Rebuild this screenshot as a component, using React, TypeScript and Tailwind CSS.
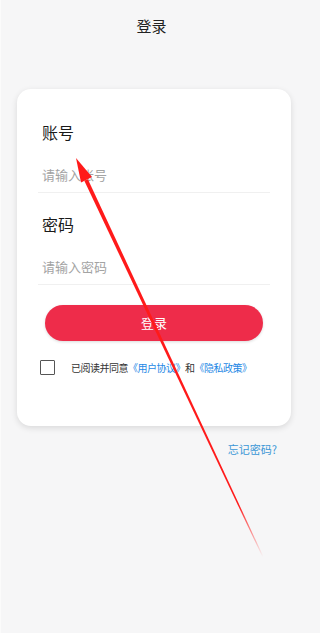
import React from "react";

export default function App() {
  const font = { fontFamily: '"Noto Sans CJK SC", "Noto Sans", sans-serif' };
  return (
    <div className="min-h-screen bg-[#f6f6f7]">
      <div
        className="relative w-[302px] h-[633px] overflow-hidden bg-[#f6f6f7] border-l border-[#fbfbfb]"
        style={font}
      >
        <div className="pt-[17px] text-center text-[15px] leading-[18px] text-[#222] font-normal">登录</div>

        <div className="mt-[54px] mx-[16px] w-[274px] rounded-[14px] bg-white shadow-[0_2px_6px_rgba(0,0,0,0.12)] pt-[33px] pb-[51px] px-[21px]">
          <div className="pl-[4px] text-[16px] leading-[20px] text-[#1a1a1a]">账号</div>
          <div className="mt-[15px] h-[36px] flex items-center pl-[4px] text-[13px] text-[#a3a3a3] border-b border-[#f0f0f0]">
            请输入账号
          </div>
          <div className="mt-[21px] pl-[4px] text-[16px] leading-[20px] text-[#1a1a1a]">密码</div>
          <div className="mt-[15px] h-[36px] flex items-center pl-[4px] text-[13px] text-[#a3a3a3] border-b border-[#f0f0f0]">
            请输入密码
          </div>
          <div className="mt-[20px] mx-[7px] h-[36px] rounded-full bg-[#ee2c4a] flex items-center justify-center text-white text-[13px] shadow-[0_1px_3px_rgba(0,0,0,0.15)]">
            登录
          </div>
          <div className="mt-[19px] flex items-center">
            <div className="ml-[2px] w-[15px] h-[15px] shrink-0 border-[1.5px] border-[#555] rounded-[1px]" />
            <div className="ml-[16px] whitespace-nowrap text-[10px] leading-[14px] tracking-[-0.5px] text-[#333]">
              已阅读并同意<span className="text-[#1e88e5]">《用户协议》</span>和<span className="text-[#1e88e5]">《隐私政策》</span>
            </div>
          </div>
        </div>

        <div className="mt-[16px] pr-[25px] text-right text-[11px] leading-[14px] text-[#3a96d6]">忘记密码?</div>

        <svg className="pointer-events-none absolute left-0 top-0" width="302" height="633" viewBox="0 0 302 633">
          <defs>
            <linearGradient id="fade" gradientUnits="userSpaceOnUse" x1="85" y1="180" x2="262" y2="557">
              <stop offset="0" stopColor="#ff1a1a" stopOpacity="1" />
              <stop offset="0.86" stopColor="#ff1a1a" stopOpacity="1" />
              <stop offset="1" stopColor="#ff1a1a" stopOpacity="0" />
            </linearGradient>
          </defs>
          <polygon points="75,158 91,177 80,182.5" fill="#ff1a1a" />
          <polygon points="83.3,180.8 86.9,179.2 262.5,556.8 261.5,557.2" fill="url(#fade)" />
        </svg>
      </div>
    </div>
  );
}
